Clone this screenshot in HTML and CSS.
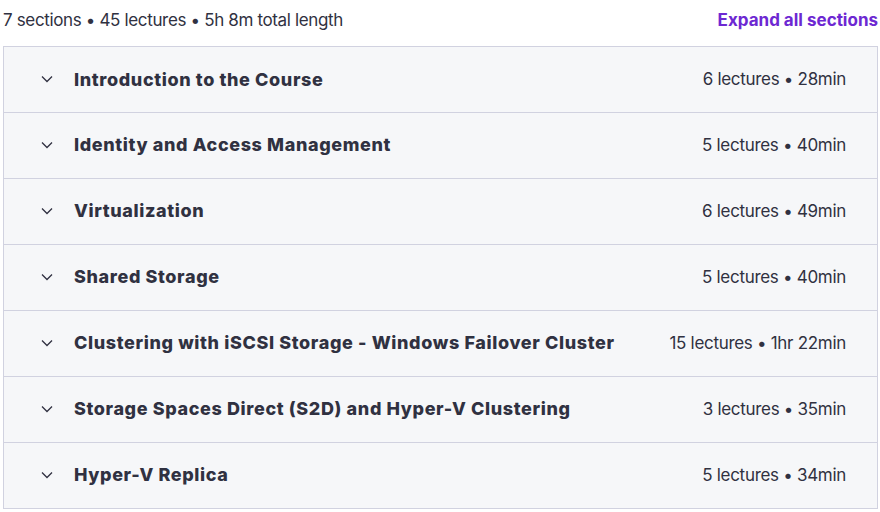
FILE: index.html
```html
<!DOCTYPE html>
<html>
<head>
<meta charset="utf-8">
<link rel="stylesheet" href="styles.css">
</head>
<body>
<div class="curriculum">
  <div class="summary">
    <span class="stats">7 sections • 45 lectures • 5h 8m total length</span>
    <button class="expand">Expand all sections</button>
  </div>
  <div class="sections">
    <div class="section"><svg class="chev" viewBox="0 0 12 8"><path d="M1 1.5 L6 6.5 L11 1.5" /></svg><span class="title">Introduction to the Course</span><span class="meta">6 lectures • 28min</span></div>
    <div class="section"><svg class="chev" viewBox="0 0 12 8"><path d="M1 1.5 L6 6.5 L11 1.5" /></svg><span class="title">Identity and Access Management</span><span class="meta">5 lectures • 40min</span></div>
    <div class="section"><svg class="chev" viewBox="0 0 12 8"><path d="M1 1.5 L6 6.5 L11 1.5" /></svg><span class="title">Virtualization</span><span class="meta">6 lectures • 49min</span></div>
    <div class="section"><svg class="chev" viewBox="0 0 12 8"><path d="M1 1.5 L6 6.5 L11 1.5" /></svg><span class="title">Shared Storage</span><span class="meta">5 lectures • 40min</span></div>
    <div class="section"><svg class="chev" viewBox="0 0 12 8"><path d="M1 1.5 L6 6.5 L11 1.5" /></svg><span class="title">Clustering with iSCSI Storage - Windows Failover Cluster</span><span class="meta">15 lectures • 1hr 22min</span></div>
    <div class="section"><svg class="chev" viewBox="0 0 12 8"><path d="M1 1.5 L6 6.5 L11 1.5" /></svg><span class="title">Storage Spaces Direct (S2D) and Hyper-V Clustering</span><span class="meta">3 lectures • 35min</span></div>
    <div class="section"><svg class="chev" viewBox="0 0 12 8"><path d="M1 1.5 L6 6.5 L11 1.5" /></svg><span class="title">Hyper-V Replica</span><span class="meta">5 lectures • 34min</span></div>
  </div>
</div>
</body>
</html>
```
FILE: styles.css
```css
html, body {
  margin: 0;
  padding: 0;
  background: #ffffff;
}
body {
  font-family: Inter, "Liberation Sans", sans-serif;
  color: #303141;
}
.curriculum {
  width: 875px;
  margin-left: 3px;
}
.summary {
  display: flex;
  justify-content: space-between;
  align-items: center;
  height: 40px;
  padding-bottom: 6px;
}
.stats {
  font-size: 17px;
  color: #303141;
  letter-spacing: -0.35px;
}
.expand {
  border: none;
  background: none;
  padding: 0;
  font-family: inherit;
  font-size: 17px;
  font-weight: 700;
  color: #6d28d2;
  letter-spacing: 0;
}
.sections {
  border: 1px solid #d1d2e0;
  background: #f6f7f9;
}
.section {
  box-sizing: border-box;
  display: flex;
  align-items: center;
  height: 66px;
  padding: 0 31px 2px 37px;
  border-top: 1px solid #d1d2e0;
}
.section:first-child {
  border-top: none;
  height: 65px;
  padding-bottom: 1px;
}
.chev {
  width: 12px;
  height: 8px;
  flex: none;
  fill: none;
  stroke: #303141;
  stroke-width: 1.3;
  margin-right: 21px;
}
.title {
  flex: 1;
  font-size: 18px;
  font-weight: 800;
  color: #303141;
  letter-spacing: 0.62px;
}
.meta {
  font-size: 17px;
  color: #303141;
  letter-spacing: -0.3px;
}
```
